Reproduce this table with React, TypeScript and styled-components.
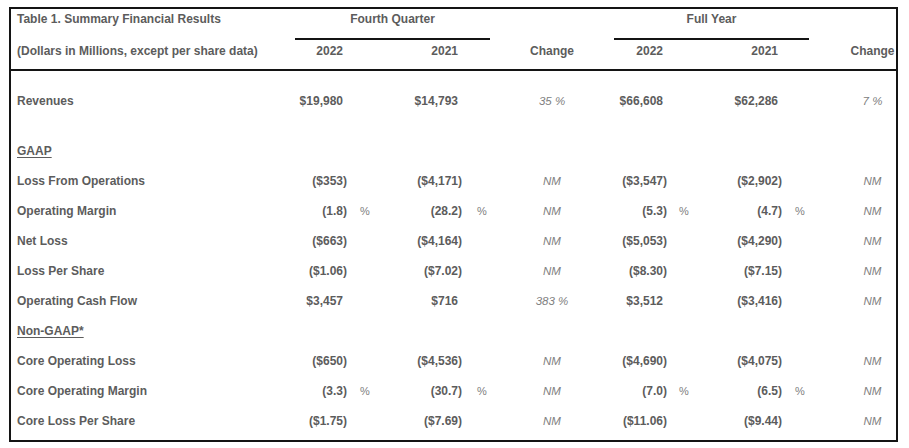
import React from "react";
import styled, { createGlobalStyle } from "styled-components";

const GlobalStyle = createGlobalStyle`
  html, body { margin: 0; padding: 0; background: #ffffff; }
  body { font-family: "Liberation Sans", Arial, Helvetica, sans-serif; }
`;

const INK = "#141414";
const TEXT = "#5c5c5c";
const SOFT = "#808080";

const COLS = "284px 52px 28px 87px 28px 124px 53px 28px 87px 27px 40px 47px";

const Frame = styled.div`
  margin: 7px 0 0 9px;
  width: 889px;
  height: 435px;
  box-sizing: border-box;
  border: 2px solid ${INK};
  display: flex;
  flex-direction: column;
  color: ${TEXT};
  font-size: 12px;
  font-weight: 700;
`;

const Grid = styled.div`
  display: grid;
  grid-template-columns: ${COLS};
  grid-template-rows: 100%;
  & > * {
    grid-row: 1;
  }
`;

const HeadTop = styled(Grid)`
  height: 31px;
  align-items: start;
`;

const HeadSub = styled(Grid)`
  height: 31px;
  box-sizing: border-box;
  border-bottom: 2px solid ${INK};
  align-items: start;
  padding-top: 4px;
  line-height: 14px;
`;

const Caption = styled.div`
  grid-column: 1;
  padding: 3px 0 0 6px;
  line-height: 14px;
  white-space: nowrap;
`;

const GroupTitle = styled.div<{ $from: number; $to: number }>`
  grid-column: ${(p) => p.$from} / ${(p) => p.$to};
  height: 31px;
  box-sizing: border-box;
  border-bottom: 2px solid ${INK};
  text-align: center;
  padding-top: 3px;
  line-height: 14px;
`;

const Body = styled.div`
  padding-top: 15px;
  display: flex;
  flex-direction: column;
`;

const DataRow = styled(Grid)<{ $gapAfter?: boolean }>`
  height: 30px;
  align-items: center;
  line-height: 14px;
  margin-bottom: ${(p) => (p.$gapAfter ? "20px" : "0")};
`;

const Label = styled.div<{ $section?: boolean }>`
  grid-column: 1;
  padding-left: 6px;
  white-space: nowrap;
  text-decoration: ${(p) => (p.$section ? "underline" : "none")};
  text-decoration-thickness: 1px;
  text-underline-offset: 2px;
`;

const Value = styled.div<{ $col: number; $hang?: boolean }>`
  grid-column: ${(p) => p.$col};
  text-align: right;
  white-space: nowrap;
  padding-right: ${(p) => (p.$hang ? "0" : "4px")};
`;

const Pct = styled.div<{ $col: number; $offset: number }>`
  grid-column: ${(p) => p.$col};
  padding-left: ${(p) => p.$offset}px;
  font-size: 11px;
  font-weight: 400;
  color: ${SOFT};
`;

const ChangeHead = styled.div<{ $col: number }>`
  grid-column: ${(p) => p.$col};
  text-align: center;
  white-space: nowrap;
`;

const Change = styled.div<{ $col: number }>`
  grid-column: ${(p) => p.$col};
  text-align: center;
  white-space: nowrap;
  font-size: 11.5px;
  font-style: italic;
  font-weight: 400;
  color: ${SOFT};
`;

type Line =
  | { kind: "section"; label: string }
  | {
      kind: "data";
      label: string;
      values: [string, string, string, string];
      q: string;
      fy: string;
      pct?: boolean;
      gapAfter?: boolean;
    };

const lines: Line[] = [
  { kind: "data", label: "Revenues", values: ["$19,980", "$14,793", "$66,608", "$62,286"], q: "35 %", fy: "7 %", gapAfter: true },
  { kind: "section", label: "GAAP" },
  { kind: "data", label: "Loss From Operations", values: ["($353)", "($4,171)", "($3,547)", "($2,902)"], q: "NM", fy: "NM" },
  { kind: "data", label: "Operating Margin", values: ["(1.8)", "(28.2)", "(5.3)", "(4.7)"], q: "NM", fy: "NM", pct: true },
  { kind: "data", label: "Net Loss", values: ["($663)", "($4,164)", "($5,053)", "($4,290)"], q: "NM", fy: "NM" },
  { kind: "data", label: "Loss Per Share", values: ["($1.06)", "($7.02)", "($8.30)", "($7.15)"], q: "NM", fy: "NM" },
  { kind: "data", label: "Operating Cash Flow", values: ["$3,457", "$716", "$3,512", "($3,416)"], q: "383 %", fy: "NM" },
  { kind: "section", label: "Non-GAAP*" },
  { kind: "data", label: "Core Operating Loss", values: ["($650)", "($4,536)", "($4,690)", "($4,075)"], q: "NM", fy: "NM" },
  { kind: "data", label: "Core Operating Margin", values: ["(3.3)", "(30.7)", "(7.0)", "(6.5)"], q: "NM", fy: "NM", pct: true },
  { kind: "data", label: "Core Loss Per Share", values: ["($1.75)", "($7.69)", "($11.06)", "($9.44)"], q: "NM", fy: "NM" },
];

const valueCols = [2, 4, 7, 9];
const pctCols = [3, 5, 8, 10];
const pctOffsets = [13, 15, 12, 13];

export default function App() {
  return (
    <>
      <GlobalStyle />
      <Frame>
        <HeadTop>
          <Caption>Table 1. Summary Financial Results</Caption>
          <GroupTitle $from={2} $to={6}>Fourth Quarter</GroupTitle>
          <GroupTitle $from={7} $to={11}>Full Year</GroupTitle>
        </HeadTop>
        <HeadSub>
          <Label>(Dollars in Millions, except per share data)</Label>
          <Value $col={2}>2022</Value>
          <Value $col={4}>2021</Value>
          <ChangeHead $col={6}>Change</ChangeHead>
          <Value $col={7}>2022</Value>
          <Value $col={9}>2021</Value>
          <ChangeHead $col={12}>Change</ChangeHead>
        </HeadSub>
        <Body>
          {lines.map((line, i) =>
            line.kind === "section" ? (
              <DataRow key={i}>
                <Label $section>{line.label}</Label>
              </DataRow>
            ) : (
              <DataRow key={i} $gapAfter={line.gapAfter}>
                <Label>{line.label}</Label>
                {line.values.map((v, j) => (
                  <React.Fragment key={j}>
                    <Value $col={valueCols[j]} $hang={v.endsWith(")")}>
                      {v}
                    </Value>
                    {line.pct && (
                      <Pct $col={pctCols[j]} $offset={pctOffsets[j]}>
                        %
                      </Pct>
                    )}
                  </React.Fragment>
                ))}
                <Change $col={6}>{line.q}</Change>
                <Change $col={12}>{line.fy}</Change>
              </DataRow>
            )
          )}
        </Body>
      </Frame>
    </>
  );
}
